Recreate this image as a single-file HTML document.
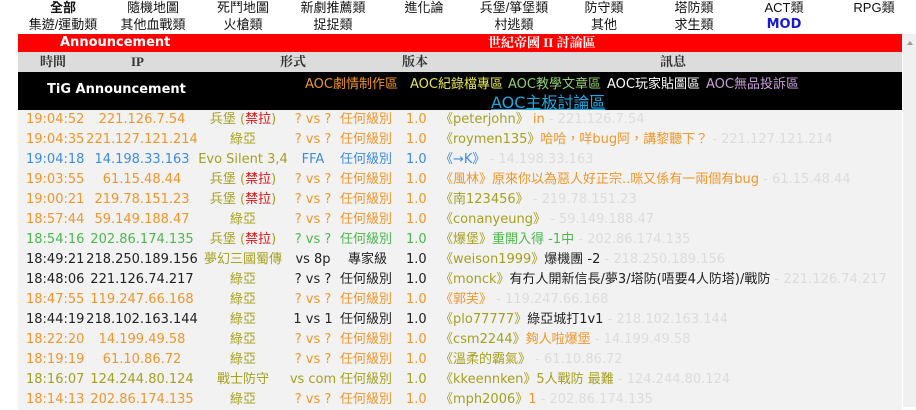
<!DOCTYPE html>
<html><head><meta charset="utf-8"><style>
*{margin:0;padding:0;box-sizing:border-box}
body{width:916px;height:407px;overflow:hidden;background:#fff;font-family:"Liberation Sans","Noto Sans CJK TC",sans-serif;font-size:13px;position:relative}
.a{position:absolute;white-space:nowrap}
.c{transform:translateX(-50%)}
.nav{font-size:13px;color:#111;line-height:17px}
.row{position:absolute;left:18px;width:884px;height:20px;background:#f2f2f2;line-height:20px;font-size:13px;font-family:"DejaVu Sans","Noto Sans CJK TC",sans-serif}
.o{color:#f0962a}.g{color:#a6a020}.b{color:#3d8ddc}.gr{color:#4cb84c}.k{color:#222}.r{color:#e01010}.ip{color:#dcdcdc}
.dv{font-family:"DejaVu Sans","Noto Sans CJK TC",sans-serif}
</style></head><body>
<div class="nav">
<span class="a c" style="left:63px;top:-1px;font-weight:bold">全部</span>
<span class="a c" style="left:153px;top:-1px">隨機地圖</span>
<span class="a c" style="left:243px;top:-1px">死鬥地圖</span>
<span class="a c" style="left:333px;top:-1px">新劇推薦類</span>
<span class="a c" style="left:424px;top:-1px">進化論</span>
<span class="a c" style="left:514px;top:-1px">兵堡/箏堡類</span>
<span class="a c" style="left:604px;top:-1px">防守類</span>
<span class="a c" style="left:694px;top:-1px">塔防類</span>
<span class="a c" style="left:784px;top:-1px">ACT類</span>
<span class="a c" style="left:874px;top:-1px">RPG類</span>
<span class="a c" style="left:63px;top:16px">集遊/運動類</span>
<span class="a c" style="left:153px;top:16px">其他血戰類</span>
<span class="a c" style="left:243px;top:16px">火槍類</span>
<span class="a c" style="left:333px;top:16px">捉捉類</span>
<span class="a c" style="left:514px;top:16px">村逃類</span>
<span class="a c" style="left:604px;top:16px">其他</span>
<span class="a c" style="left:694px;top:16px">求生類</span>
<span class="a c dv" style="left:784px;top:16px;color:#1a1ad0;font-weight:bold">MOD</span>
</div>
<div class="a" style="left:903px;top:34px;width:13px;height:373px;background:#f0f0f0"></div>
<div class="a" style="left:907px;top:41px;width:0;height:0;border-left:3px solid transparent;border-right:3px solid transparent;border-bottom:4px solid #999"></div>
<div class="a" style="left:18px;top:34px;width:884px;height:18px;background:#ff0000;color:#fff;font-weight:bold;line-height:18px">
<span class="a dv" style="left:42px">Announcement</span>
<span class="a" style="left:470px;font-family:'Liberation Serif','Noto Serif CJK SC',serif">世紀帝國 II 討論區</span></div>
<div class="a" style="left:18px;top:52px;width:884px;height:20px;background:#dcdcdc;color:#333;font-weight:bold;line-height:20px;font-family:'Liberation Serif','Noto Serif CJK SC',serif">
<span class="a" style="left:22px">時間</span><span class="a" style="left:113px">IP</span><span class="a" style="left:262px">形式</span><span class="a" style="left:384px">版本</span><span class="a" style="left:642px">訊息</span></div>
<div class="a dv" style="left:18px;top:72px;width:884px;height:38px;background:#000">
<span class="a" style="left:29px;top:10px;color:#fff;font-weight:bold">TiG Announcement</span>
<span class="a" style="left:287px;top:1px;color:#f0962a">AOC劇情制作區</span>
<span class="a" style="left:392px;top:1px;color:#e8e850">AOC紀錄檔專區</span>
<span class="a" style="left:490px;top:1px;color:#90d070">AOC教學文章區</span>
<span class="a" style="left:589px;top:1px;color:#fff">AOC玩家貼圖區</span>
<span class="a" style="left:688px;top:1px;color:#c8a0d8">AOC無品投訴區</span>
<span class="a" style="left:473px;top:17px;color:#20a8e0;font-size:16px;text-decoration:underline">AOC主板討論區</span>
</div>

<div class="row o" style="top:110px"><span class="a" style="left:8px">19:04:52</span><span class="a c" style="left:124px">221.126.7.54</span><span class="a c g" style="left:225px">兵堡 (<span class="r">禁拉</span>)</span><span class="a c" style="left:295px">? vs ?</span><span class="a" style="left:322px">任何級別</span><span class="a" style="left:388px">1.0</span><span class="a" style="left:422px"><span class="g">《peterjohn》</span> in <span class="ip">- 221.126.7.54</span></span></div>
<div class="row o" style="top:130px"><span class="a" style="left:8px">19:04:35</span><span class="a c" style="left:124px">221.127.121.214</span><span class="a c g" style="left:225px">綠亞</span><span class="a c" style="left:295px">? vs ?</span><span class="a" style="left:322px">任何級別</span><span class="a" style="left:388px">1.0</span><span class="a" style="left:422px"><span class="g">《roymen135》</span>哈哈，咩bug阿，講黎聽下？ <span class="ip">- 221.127.121.214</span></span></div>
<div class="row b" style="top:150px"><span class="a" style="left:8px">19:04:18</span><span class="a c" style="left:124px">14.198.33.163</span><span class="a c g" style="left:225px">Evo Silent 3,4</span><span class="a c" style="left:295px">FFA</span><span class="a" style="left:322px">任何級別</span><span class="a" style="left:388px">1.0</span><span class="a" style="left:422px">《→K》 <span class="ip">- 14.198.33.163</span></span></div>
<div class="row o" style="top:170px"><span class="a" style="left:8px">19:03:55</span><span class="a c" style="left:124px">61.15.48.44</span><span class="a c g" style="left:225px">兵堡 (<span class="r">禁拉</span>)</span><span class="a c" style="left:295px">? vs ?</span><span class="a" style="left:322px">任何級別</span><span class="a" style="left:388px">1.0</span><span class="a" style="left:422px">《風林》原來你以為惡人好正宗..咪又係有一兩個有bug <span class="ip">- 61.15.48.44</span></span></div>
<div class="row o" style="top:190px"><span class="a" style="left:8px">19:00:21</span><span class="a c" style="left:124px">219.78.151.23</span><span class="a c g" style="left:225px">兵堡 (<span class="r">禁拉</span>)</span><span class="a c" style="left:295px">? vs ?</span><span class="a" style="left:322px">任何級別</span><span class="a" style="left:388px">1.0</span><span class="a" style="left:422px"><span class="g">《南123456》</span> <span class="ip">- 219.78.151.23</span></span></div>
<div class="row o" style="top:210px"><span class="a" style="left:8px">18:57:44</span><span class="a c" style="left:124px">59.149.188.47</span><span class="a c g" style="left:225px">綠亞</span><span class="a c" style="left:295px">? vs ?</span><span class="a" style="left:322px">任何級別</span><span class="a" style="left:388px">1.0</span><span class="a" style="left:422px"><span class="g">《conanyeung》</span> <span class="ip">- 59.149.188.47</span></span></div>
<div class="row gr" style="top:230px"><span class="a" style="left:8px">18:54:16</span><span class="a c" style="left:124px">202.86.174.135</span><span class="a c g" style="left:225px">兵堡 (<span class="r">禁拉</span>)</span><span class="a c" style="left:295px">? vs ?</span><span class="a" style="left:322px">任何級別</span><span class="a" style="left:388px">1.0</span><span class="a" style="left:422px"><span class="g">《爆堡》</span>重開入得 -1中 <span class="ip">- 202.86.174.135</span></span></div>
<div class="row k" style="top:250px"><span class="a" style="left:8px">18:49:21</span><span class="a c" style="left:124px">218.250.189.156</span><span class="a c g" style="left:225px">夢幻三國蜀傳</span><span class="a c" style="left:295px">vs 8p</span><span class="a" style="left:330px">專家級</span><span class="a" style="left:388px">1.0</span><span class="a" style="left:422px"><span class="g">《weison1999》</span>爆機團 -2 <span class="ip">- 218.250.189.156</span></span></div>
<div class="row k" style="top:270px"><span class="a" style="left:8px">18:48:06</span><span class="a c" style="left:124px">221.126.74.217</span><span class="a c g" style="left:225px">綠亞</span><span class="a c" style="left:295px">? vs ?</span><span class="a" style="left:322px">任何級別</span><span class="a" style="left:388px">1.0</span><span class="a" style="left:422px"><span class="g">《monck》</span>有冇人開新信長/夢3/塔防(唔要4人防塔)/戰防 <span class="ip">- 221.126.74.217</span></span></div>
<div class="row o" style="top:290px"><span class="a" style="left:8px">18:47:55</span><span class="a c" style="left:124px">119.247.66.168</span><span class="a c g" style="left:225px">綠亞</span><span class="a c" style="left:295px">? vs ?</span><span class="a" style="left:322px">任何級別</span><span class="a" style="left:388px">1.0</span><span class="a" style="left:422px">《郭芙》 <span class="ip">- 119.247.66.168</span></span></div>
<div class="row k" style="top:310px"><span class="a" style="left:8px">18:44:19</span><span class="a c" style="left:124px">218.102.163.144</span><span class="a c g" style="left:225px">綠亞</span><span class="a c" style="left:295px">1 vs 1</span><span class="a" style="left:322px">任何級別</span><span class="a" style="left:388px">1.0</span><span class="a" style="left:422px"><span class="g">《plo77777》</span>綠亞城打1v1 <span class="ip">- 218.102.163.144</span></span></div>
<div class="row o" style="top:330px"><span class="a" style="left:8px">18:22:20</span><span class="a c" style="left:124px">14.199.49.58</span><span class="a c g" style="left:225px">綠亞</span><span class="a c" style="left:295px">? vs ?</span><span class="a" style="left:322px">任何級別</span><span class="a" style="left:388px">1.0</span><span class="a" style="left:422px"><span class="g">《csm2244》</span>夠人啦爆堡 <span class="ip">- 14.199.49.58</span></span></div>
<div class="row o" style="top:350px"><span class="a" style="left:8px">18:19:19</span><span class="a c" style="left:124px">61.10.86.72</span><span class="a c g" style="left:225px">綠亞</span><span class="a c" style="left:295px">? vs ?</span><span class="a" style="left:322px">任何級別</span><span class="a" style="left:388px">1.0</span><span class="a" style="left:422px"><span class="g">《溫柔的霸氣》</span> <span class="ip">- 61.10.86.72</span></span></div>
<div class="row g" style="top:370px"><span class="a" style="left:8px">18:16:07</span><span class="a c" style="left:124px">124.244.80.124</span><span class="a c g" style="left:225px">戰士防守</span><span class="a c" style="left:295px">vs com</span><span class="a" style="left:322px">任何級別</span><span class="a" style="left:388px">1.0</span><span class="a" style="left:422px">《kkeennken》5人戰防 最難 <span class="ip">- 124.244.80.124</span></span></div>
<div class="row o" style="top:390px"><span class="a" style="left:8px">18:14:13</span><span class="a c" style="left:124px">202.86.174.135</span><span class="a c g" style="left:225px">綠亞</span><span class="a c" style="left:295px">? vs ?</span><span class="a" style="left:322px">任何級別</span><span class="a" style="left:388px">1.0</span><span class="a" style="left:422px"><span class="g">《mph2006》</span>1 <span class="ip">- 202.86.174.135</span></span></div>
</body></html>
